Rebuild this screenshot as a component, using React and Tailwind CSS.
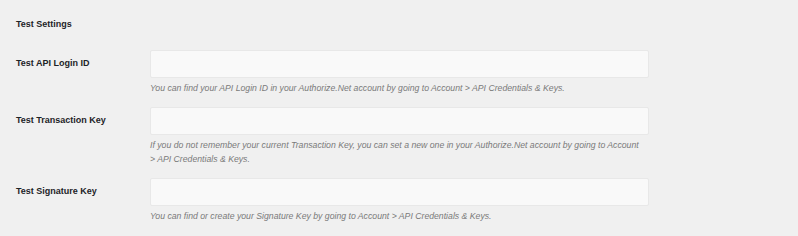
const FIELDS = [
  {
    label: 'Test API Login ID',
    help: 'You can find your API Login ID in your Authorize.Net account by going to Account > API Credentials & Keys.',
  },
  {
    label: 'Test Transaction Key',
    help: 'If you do not remember your current Transaction Key, you can set a new one in your Authorize.Net account by going to Account > API Credentials & Keys.',
  },
  {
    label: 'Test Signature Key',
    help: 'You can find or create your Signature Key by going to Account > API Credentials & Keys.',
  },
]

export default function App() {
  return (
    <div className="w-[798px] h-[236px] bg-[#f0f0f0] px-4 pt-[17px] text-[#1d2327] overflow-hidden" style={{ fontFamily: '"Liberation Sans", Arial, sans-serif' }}>
      <h2 className="text-[9px] leading-[14px] font-bold">Test Settings</h2>

      <div className="mt-[19px] flex flex-col gap-[12px]">
        {FIELDS.map(f => (
          <div key={f.label} className="grid grid-cols-[134px_499px]">
            <label className="pt-[6px] text-[9px] leading-[14px] font-bold">{f.label}</label>
            <div>
              <input type="text" className="block w-full h-[28px] bg-[#f9f9f9] border border-[#e8e8e8] rounded-[2px] outline-none" />
              <p className="mt-[3px] pr-[8px] text-[8.7px] leading-[14px] italic text-[#7a7a7a]">{f.help}</p>
            </div>
          </div>
        ))}
      </div>
    </div>
  )
}
